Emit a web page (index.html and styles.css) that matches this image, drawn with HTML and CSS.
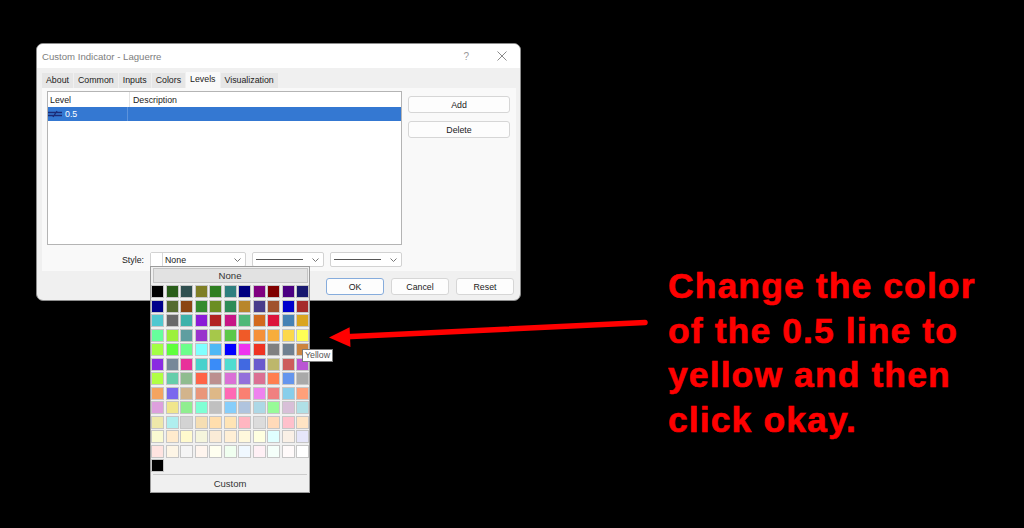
FILE: index.html
```html
<!DOCTYPE html>
<html lang="en">
<head>
    <meta charset="UTF-8">
    <meta name="viewport" content="width=device-width, initial-scale=1.0">
    <title>Custom Indicator - Laguerre</title>
    <link rel="stylesheet" href="styles.css">
</head>
<body>
    <div class="dialog">
        <div class="titlebar">
            <span class="title">Custom Indicator - Laguerre</span>
            <span class="help">?</span>
            <svg class="close" width="10" height="10" viewBox="0 0 10 10">
                <path d="M0.5 0.5 L9.5 9.5 M9.5 0.5 L0.5 9.5" stroke="#8a8a8a" stroke-width="1" fill="none"/>
            </svg>
        </div>

        <div class="body">
            <div class="tabs">
                <span class="tab">About</span>
                <span class="tab">Common</span>
                <span class="tab">Inputs</span>
                <span class="tab">Colors</span>
                <span class="tab active">Levels</span>
                <span class="tab">Visualization</span>
            </div>

            <div class="pane">
                <div class="pane-top">
                    <div class="list">
                        <div class="list-head">
                            <span class="col-level">Level</span>
                            <span class="col-desc">Description</span>
                        </div>
                        <div class="list-row selected">
                            <span class="col-level">
                                <svg class="level-icon" width="14" height="8" viewBox="0 0 14 8">
                                    <path d="M0 2.5 H14 M0 5.5 H14 M5 7 L9 1" stroke="#1c2c78" stroke-width="1.3" fill="none"/>
                                </svg>
                                0.5
                            </span>
                            <span class="col-desc"></span>
                        </div>
                    </div>
                    <div class="side-buttons">
                        <button class="btn">Add</button>
                        <button class="btn">Delete</button>
                    </div>
                </div>

                <div class="style-row">
                    <span class="style-label">Style:</span>
                    <div class="combo combo-color">
                        <span class="swatch-none"></span>
                        <span class="combo-text">None</span>
                        <svg class="chevron" width="7" height="4" viewBox="0 0 7 4"><path d="M0.5 0.5 L3.5 3.5 L6.5 0.5" stroke="#777" fill="none"/></svg>
                    </div>
                    <div class="combo combo-line">
                        <span class="line"></span>
                        <svg class="chevron" width="7" height="4" viewBox="0 0 7 4"><path d="M0.5 0.5 L3.5 3.5 L6.5 0.5" stroke="#777" fill="none"/></svg>
                    </div>
                    <div class="combo combo-line">
                        <span class="line"></span>
                        <svg class="chevron" width="7" height="4" viewBox="0 0 7 4"><path d="M0.5 0.5 L3.5 3.5 L6.5 0.5" stroke="#777" fill="none"/></svg>
                    </div>
                </div>
            </div>

            <div class="footer">
                <button class="btn btn-wide btn-default">OK</button>
                <button class="btn btn-wide">Cancel</button>
                <button class="btn btn-wide">Reset</button>
            </div>
        </div>
    </div>

    <!-- colour drop-down of the Style combo -->
    <div class="picker">
        <div class="picker-none">None</div>
        <div class="palette" id="palette"></div>
        <div class="palette custom-row">
            <span class="swatch" style="background: #000;"></span>
        </div>
        <div class="picker-sep"></div>
        <div class="picker-custom">Custom</div>
    </div>
    <div class="tooltip">Yellow</div>

    <svg class="arrow" width="1024" height="528" viewBox="0 0 1024 528">
        <line x1="645" y1="322.5" x2="346" y2="336.8" stroke="#ff0000" stroke-width="5.5" stroke-linecap="round"/>
        <polygon points="329,337.6 350.5,347 349.6,327.2" fill="#ff0000"/>
    </svg>

    <p class="note">Change the color<br>of the 0.5 line to<br>yellow and then<br>click okay.</p>

    <script>
        // MetaTrader web colour table, 11 per row
        const colors = [
            '#000000', '#2a5e1a', '#2f4f4f', '#7f7f26', '#2f7f22', '#2f7f7f', '#000080', '#800080', '#800000', '#4b0082', '#191970',
            '#00008b', '#556b2f', '#8b4513', '#338b2e', '#6b8e23', '#2e8b57', '#b8862b', '#483d8b', '#a0522d', '#0000cd', '#a52a2a',
            '#50c8d0', '#696969', '#3fb2aa', '#8a1ad6', '#b22222', '#c71585', '#4fb878', '#d2691e', '#dc143c', '#4682b4', '#daa520',
            '#66ff9c', '#9cf03c', '#5f9ea0', '#9932cc', '#a6c84a', '#5cc84a', '#f05a28', '#f5913a', '#f7ad3c', '#fcd84a', '#ffff55',
            '#a3ff44', '#5fff3c', '#6cff8c', '#80ffff', '#4fb8f5', '#0000ff', '#ee33ee', '#ee3322', '#808080', '#708090', '#cd853f',
            '#8a2be2', '#778899', '#e8309a', '#48d1cc', '#3a8cf8', '#50dcd0', '#4169e1', '#6a5acd', '#bdb76b', '#cd5c5c', '#ba55d3',
            '#b0ff44', '#66cdaa', '#8fbc8f', '#ff6347', '#bc8f8f', '#da70d6', '#9370db', '#db7093', '#ff7f50', '#6495ed', '#a9a9a9',
            '#f4a460', '#7b68ee', '#d2b48c', '#e9967a', '#deb887', '#ff69b4', '#fa8072', '#ee82ee', '#f08080', '#87ceeb', '#ffa07a',
            '#dda0dd', '#f0e68c', '#90ee90', '#7fffd4', '#c0c0c0', '#87cefa', '#b0c4de', '#add8e6', '#98fb98', '#d8bfd8', '#b0e0e6',
            '#eee8aa', '#afeeee', '#d3d3d3', '#f5deb3', '#ffdead', '#ffe4b5', '#ffb6c1', '#dcdcdc', '#ffdab9', '#ffc0cb', '#ffe4c4',
            '#fafad2', '#ffebcd', '#fffacd', '#f5f5dc', '#faebd7', '#ffefd5', '#fff8dc', '#ffffe0', '#e0ffff', '#faf0e6', '#e6e6fa',
            '#ffe4e1', '#fdf5e6', '#f5f5f5', '#fff5ee', '#fffff0', '#f0fff0', '#f0f8ff', '#fff0f5', '#f5fffa', '#fffafa', '#ffffff'
        ];

        const palette = document.getElementById('palette');
        colors.forEach(color => {
            const swatch = document.createElement('span');
            swatch.className = 'swatch';
            swatch.style.background = color;
            palette.appendChild(swatch);
        });
    </script>
</body>
</html>
```

FILE: styles.css
```css
body {
    margin: 0;
    width: 1024px;
    height: 528px;
    position: relative;
    overflow: hidden;
    background: #000;
    font-family: "Liberation Sans", Arial, sans-serif;
}

/* dialog window */
.dialog {
    position: absolute;
    left: 36px;
    top: 43px;
    width: 485px;
    height: 258px;
    box-sizing: border-box;
    border: 1px solid #8c8c8c;
    border-radius: 7px;
    overflow: hidden;
    background: #f0f0f0;
    display: flex;
    flex-direction: column;
    font-size: 8.8px;
    color: #1b1b1b;
}
.titlebar {
    flex-shrink: 0;
    height: 24px;
    background: #fff;
    display: flex;
    align-items: center;
    padding-left: 5px;
}
.title {
    flex: 1;
    font-size: 9.6px;
    color: #7d7d7d;
}
.help {
    font-size: 10px;
    color: #9a9a9a;
    margin-right: 28px;
}
.close {
    margin-right: 13px;
}

.body {
    flex: 1;
    display: flex;
    flex-direction: column;
    padding: 4px 4px 0 5px;
}
.tabs {
    display: flex;
    align-items: flex-end;
    gap: 1px;
    height: 16px;
}
.tab {
    height: 15px;
    line-height: 15px;
    padding: 0 4px;
    background: #e6e6e6;
}
.tab.active {
    height: 16px;
    line-height: 14px;
    background: #f9f9f9;
}

.pane {
    height: 183px;
    box-sizing: border-box;
    padding: 3px 5px 0;
    background: #f9f9f9;
}
.pane-top {
    display: flex;
    gap: 6px;
}
.list {
    width: 355px;
    height: 154px;
    box-sizing: border-box;
    border: 1px solid #b4b4b4;
    background: #fff;
}
.list-head,
.list-row {
    display: flex;
}
.list-head {
    height: 15px;
    line-height: 16px;
}
.list-row {
    height: 14px;
    line-height: 14px;
}
.list-row.selected {
    background: #3478d2;
    color: #fff;
}
.col-level {
    width: 79px;
    padding-left: 2px;
    border-right: 1px solid #e4e4e4;
    display: flex;
    align-items: center;
    gap: 3px;
}
.list-row .col-level {
    padding-left: 0;
    border-right-color: #5d93dc;
}
.col-desc {
    padding-left: 3px;
}
.level-icon {
    flex-shrink: 0;
}

.side-buttons {
    display: flex;
    flex-direction: column;
    gap: 8px;
    margin-top: 5px;
    width: 102px;
}
.btn {
    height: 17px;
    padding: 0;
    box-sizing: border-box;
    border: 1px solid #d6d6d6;
    border-radius: 3px;
    background: #fdfdfd;
    font-family: inherit;
    font-size: 8.8px;
    color: #1b1b1b;
}
.btn-wide {
    width: 58px;
}
.btn-default {
    border-color: #86acdc;
}

.style-row {
    display: flex;
    align-items: center;
    gap: 6px;
    margin-top: 7px;
}
.style-label {
    width: 97px;
    text-align: right;
}
.combo {
    height: 15px;
    box-sizing: border-box;
    border: 1px solid #d2d2d2;
    border-radius: 2px;
    background: #fff;
    display: flex;
    align-items: center;
    padding-right: 4px;
}
.combo-color {
    width: 96px;
}
.combo-line {
    width: 72px;
    padding-left: 3px;
}
.swatch-none {
    width: 12px;
    height: 13px;
    box-sizing: border-box;
    border-right: 1px solid #d8d8d8;
    background: #fff;
}
.combo-text {
    flex: 1;
    padding-left: 2px;
}
.line {
    flex: 1;
    height: 1px;
    margin-right: 9px;
    background: #555;
}

.footer {
    display: flex;
    justify-content: flex-end;
    gap: 7px;
    padding: 7px 2px 0 0;
}

/* colour picker popup */
.picker {
    position: absolute;
    left: 150px;
    top: 266px;
    width: 160px;
    height: 227px;
    box-sizing: border-box;
    border: 1px solid #9b9b9b;
    background: #f0f0f0;
    padding-top: 1px;
    display: flex;
    flex-direction: column;
    font-size: 9.6px;
    color: #333;
}
.picker-none {
    height: 15px;
    margin: 0 1.5px;
    box-sizing: border-box;
    border: 1px solid #c4c4c4;
    background: #e2e2e2;
    text-align: center;
    line-height: 13px;
}
.palette {
    display: grid;
    grid-template-columns: repeat(11, 13px);
    grid-auto-rows: 13px;
    gap: 1.5px;
    margin-top: 2px;
}
.custom-row {
    margin-top: 1.5px;
}
.swatch {
    box-sizing: border-box;
    border: 1px solid #c6c6c6;
}
.picker-sep {
    height: 1px;
    margin: 2px 2px 0;
    background: #cdcdcd;
}
.picker-custom {
    flex: 1;
    display: flex;
    align-items: center;
    justify-content: center;
    font-size: 9.5px;
}

.tooltip {
    position: absolute;
    left: 302px;
    top: 349px;
    width: 31px;
    height: 13px;
    box-sizing: border-box;
    border: 1px solid #7a7a7a;
    background: #fff;
    font-size: 8.8px;
    line-height: 11px;
    text-align: center;
    color: #555;
}

/* annotation */
.arrow {
    position: absolute;
    left: 0;
    top: 0;
}
.note {
    position: absolute;
    left: 668px;
    top: 264px;
    margin: 0;
    font-size: 35.5px;
    font-weight: bold;
    letter-spacing: 1.1px;
    line-height: 44.5px;
    color: #ff0000;
    -webkit-text-stroke: 0.6px #ff0000;
}
```
